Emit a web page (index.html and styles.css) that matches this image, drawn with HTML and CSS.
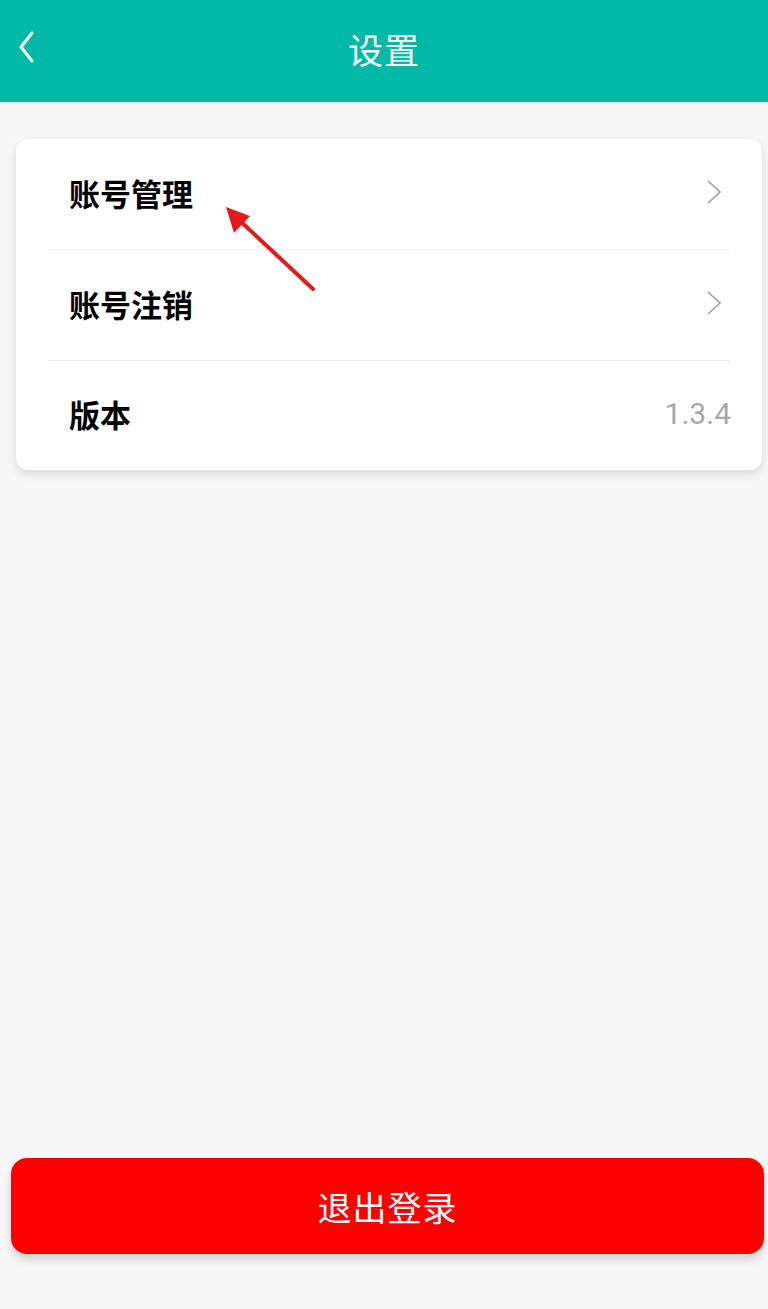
FILE: index.html
```html
<!DOCTYPE html>
<html lang="zh-CN">
<head>
    <meta charset="UTF-8">
    <meta name="viewport" content="width=device-width, initial-scale=1.0">
    <title>设置</title>
    <link rel="stylesheet" href="styles.css">
</head>
<body>
    <header class="topbar">
        <button class="back" aria-label="返回">
            <svg width="24" height="34" viewBox="0 0 24 34"><path d="M16 3 L5 17 L16 31" fill="none" stroke="#fff" stroke-width="3" stroke-linecap="round" stroke-linejoin="round"/></svg>
        </button>
        <h1 class="title">设置</h1>
    </header>

    <main class="content">
        <section class="card">
            <div class="row">
                <span class="label">账号管理</span>
                <svg class="chev" width="16" height="26" viewBox="0 0 16 26"><path d="M2 2 L14 13 L2 24" fill="none" stroke="#9e9e9e" stroke-width="1.6"/></svg>
            </div>
            <div class="row">
                <span class="label">账号注销</span>
                <svg class="chev" width="16" height="26" viewBox="0 0 16 26"><path d="M2 2 L14 13 L2 24" fill="none" stroke="#9e9e9e" stroke-width="1.6"/></svg>
            </div>
            <div class="row">
                <span class="label">版本</span>
                <span class="value">1.3.4</span>
            </div>

            <!-- annotation arrow -->
            <svg class="pointer" width="100" height="96" viewBox="0 0 100 96">
                <line x1="97" y1="82" x2="22" y2="12" stroke="#e31b1b" stroke-width="4" stroke-linecap="round"/>
                <polygon points="10,0 34,9 18,26" fill="#e31b1b"/>
            </svg>
        </section>

        <div class="spacer"></div>

        <button class="logout">退出登录</button>
    </main>
</body>
</html>
```

FILE: styles.css
```css
html, body {
    margin: 0;
    padding: 0;
    height: 100%;
}

body {
    background: #f7f7f7;
    font-family: "Noto Sans CJK SC", "Noto Sans", Roboto, sans-serif;
    display: flex;
    flex-direction: column;
}

.topbar {
    height: 102px;
    background: #00b9a6;
    display: flex;
    align-items: center;
    justify-content: center;
    position: relative;
    flex-shrink: 0;
}

.back {
    position: absolute;
    left: 16px;
    top: 30px;
    padding: 0;
    border: 0;
    background: none;
    display: flex;
}

.title {
    margin: 0;
    color: #fff;
    font-size: 35px;
    font-weight: 400;
    letter-spacing: 1px;
    line-height: 1;
    margin-bottom: 6px;
}

.content {
    flex: 1;
    display: flex;
    flex-direction: column;
    padding: 37px 0 55px;
}

.card {
    position: relative;
    margin: 0 6px 0 16px;
    background: #fff;
    border-radius: 12px;
    box-shadow: 0 4px 10px rgba(0, 0, 0, 0.12);
    padding: 0 31px 0 32px;
}

.row {
    height: 110px;
    display: flex;
    align-items: center;
    justify-content: space-between;
    border-bottom: 1px solid #efefef;
    padding-left: 21px;
}

.row:last-of-type {
    border-bottom: 0;
    height: 109px;
}

.label {
    font-size: 31px;
    font-weight: 700;
    color: #000;
    margin-top: -4px;
}

.chev {
    margin-right: 9px;
    margin-top: -4px;
}

.value {
    font-family: Roboto, sans-serif;
    font-size: 30px;
    color: #a8a8a8;
    margin-top: -4px;
}

.pointer {
    position: absolute;
    left: 200px;
    top: 68px;
}

.spacer {
    flex: 1;
}

.logout {
    margin: 0 4px 0 11px;
    height: 96px;
    border: 0;
    border-radius: 16px;
    background: #ff0000;
    color: #fff;
    font-family: "Noto Sans CJK SC", sans-serif;
    font-size: 34px;
    letter-spacing: 1px;
    box-shadow: 0 6px 10px rgba(0, 0, 0, 0.15);
}
```
